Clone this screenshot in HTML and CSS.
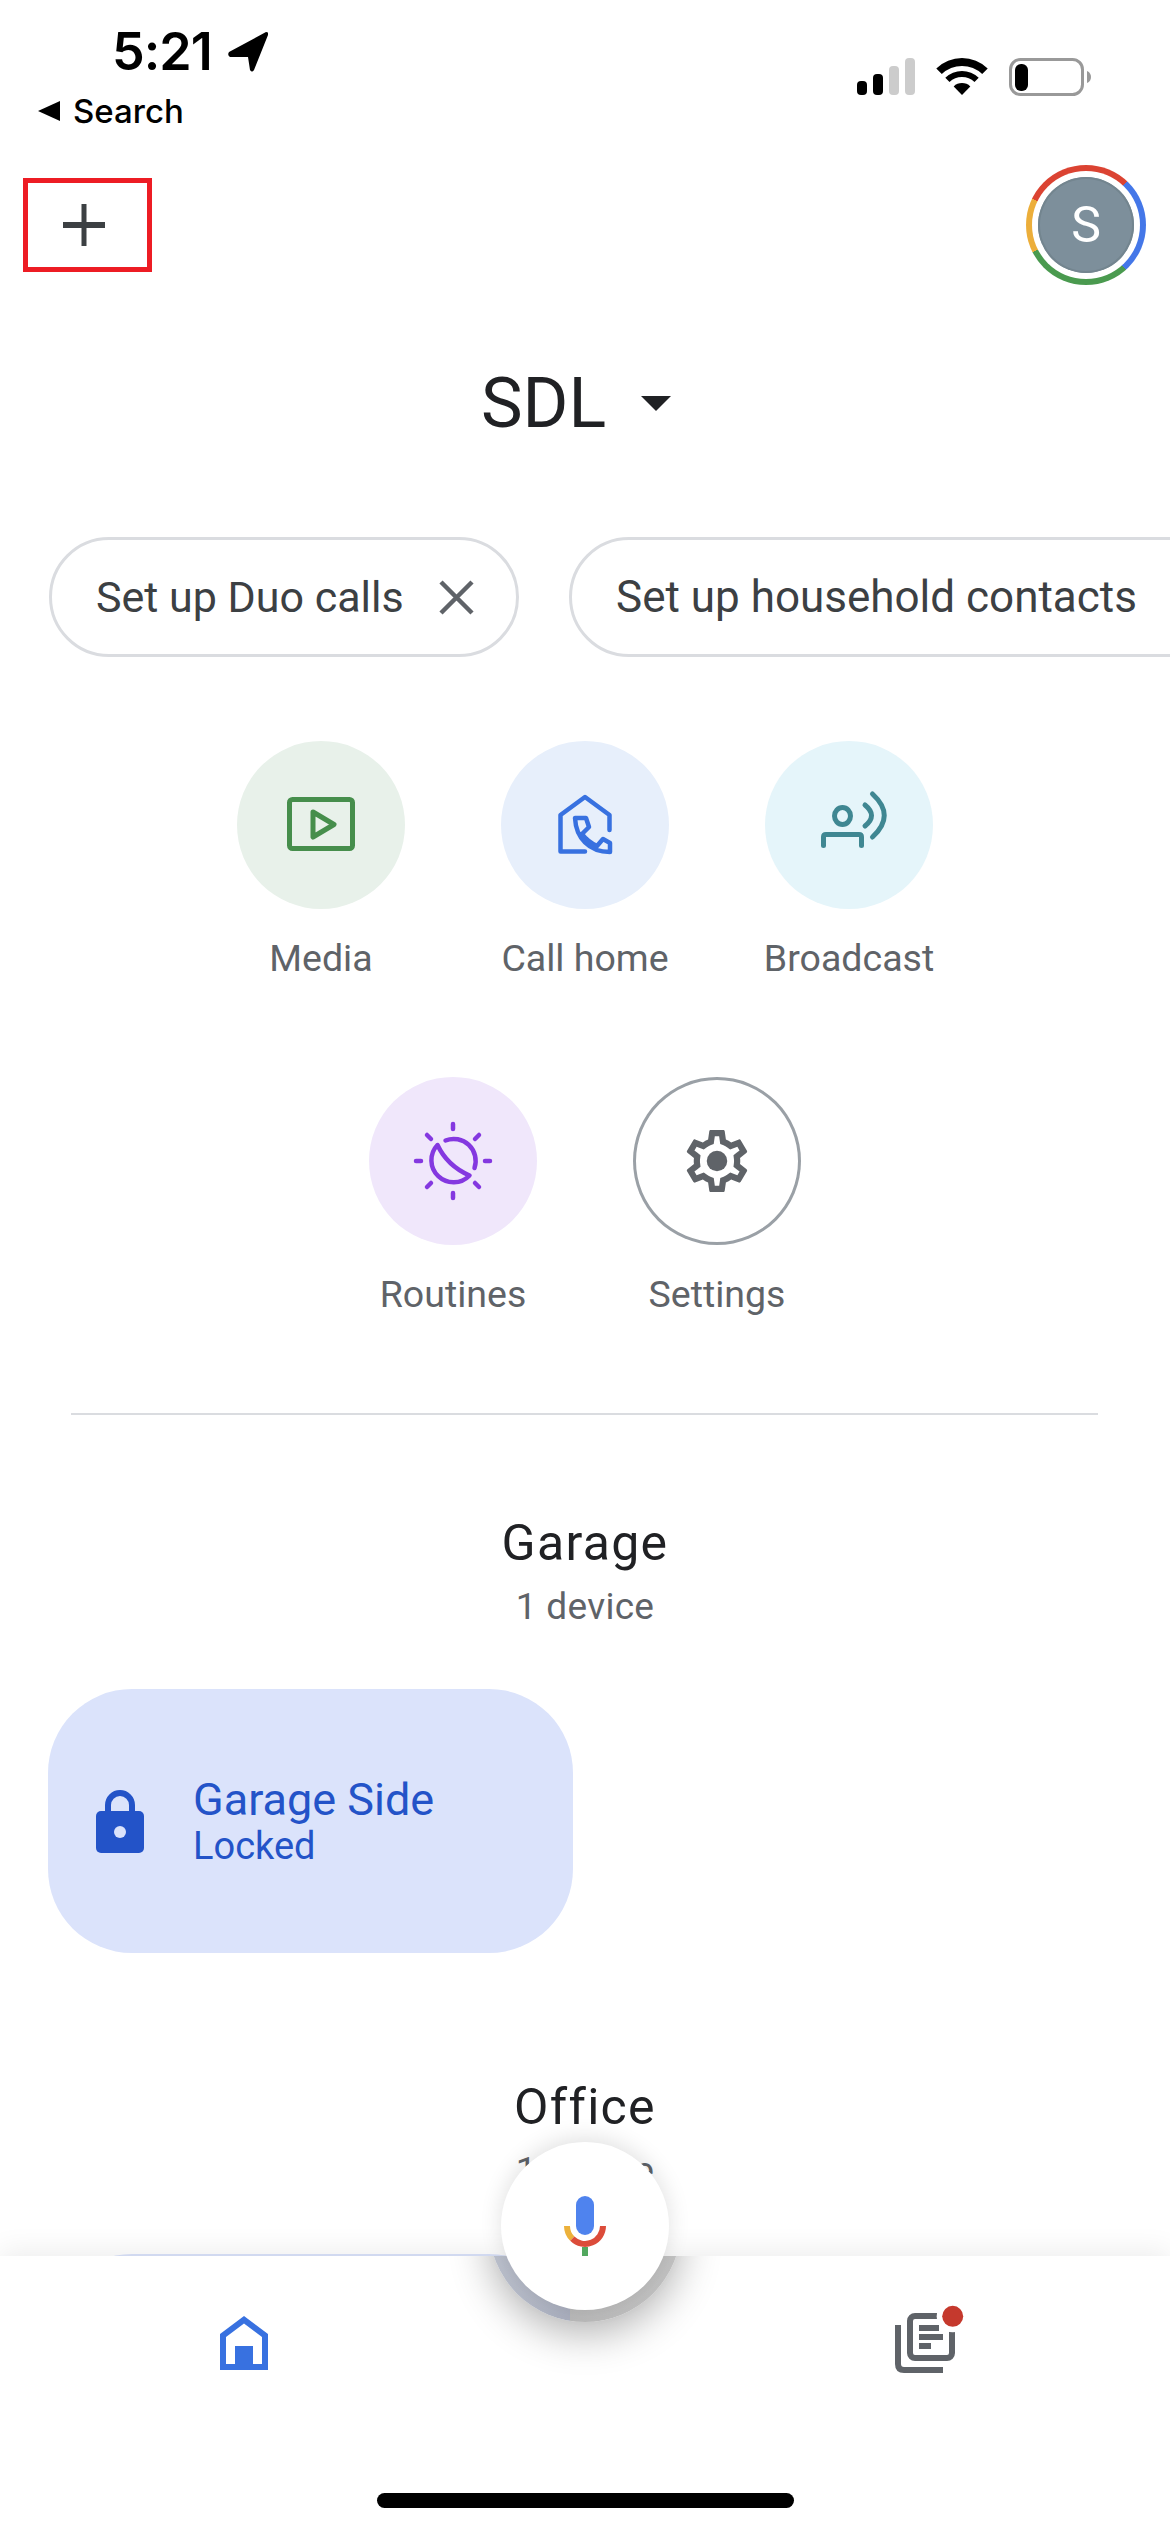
FILE: index.html
```html
<!DOCTYPE html>
<html lang="en">
<head>
<meta charset="utf-8">
<title>Google Home</title>
<link rel="stylesheet" href="styles.css">
</head>
<body>
<div class="page">
  <header class="status">
    <div class="status-left">
      <div class="time-row">
        <span class="time">5:21</span>
        <svg class="loc" width="40" height="40" viewBox="0 0 40 40"><path d="M38 0Q41 0 40 3L26 38Q24 41 22 38L20 25L2 25Q-1 23 1 20Z"/></svg>
      </div>
      <div class="back-row">
        <svg width="22" height="20" viewBox="0 0 22 20"><path d="M22 0V20L0 10Z"/></svg>
        <span class="back-text">Search</span>
      </div>
    </div>
    <div class="status-right">
      <svg width="58" height="37" viewBox="0 0 58 37"><rect y="23" width="10" height="14" rx="4"/><rect x="16" y="16" width="10" height="21" rx="4"/><rect class="dim" x="32" y="8" width="10" height="29" rx="4"/><rect class="dim" x="48" width="10" height="37" rx="4"/></svg>
      <svg width="52" height="38" viewBox="0 0 52 38"><path d="M0.3 10.4A37 37 0 0 1 51.7 10.4L46.2 16.1A29 29 0 0 0 5.8 16.1Z"/><path d="M9.3 19.7A24 24 0 0 1 42.7 19.7L38.5 24.1A18 18 0 0 0 13.5 24.1Z"/><path d="M17.7 28.4A12 12 0 0 1 34.3 28.4L26 37Z"/></svg>
      <svg width="82" height="38" viewBox="0 0 82 38"><rect class="batt" x="1.5" y="1.5" width="72" height="35" rx="10"/><rect x="6" y="6" width="13" height="27" rx="6"/><path class="nub" d="M78 13C81 14 82 17 82 19C82 21 81 24 78 25Z"/></svg>
    </div>
  </header>

  <div class="toolbar">
    <div class="add-box">
      <svg width="42" height="42" viewBox="0 0 42 42"><rect x="18.5" width="5" height="42"/><rect y="18" width="42" height="6"/></svg>
    </div>
    <div class="avatar"><div class="avatar-gap"><div class="avatar-face">S</div></div></div>
  </div>

  <div class="home-title">
    <span class="home-name">SDL</span>
    <svg width="30" height="15" viewBox="0 0 30 15"><path d="M0 0H30L15 15Z"/></svg>
  </div>

  <div class="chips">
    <div class="chip"><span>Set up Duo calls</span>
      <svg width="35" height="35" viewBox="0 0 35 35"><path d="M2 2L33 33M33 2L2 33"/></svg>
    </div>
    <div class="chip chip-long"><span>Set up household contacts</span>
      <svg width="35" height="35" viewBox="0 0 35 35"><path d="M2 2L33 33M33 2L2 33"/></svg>
    </div>
  </div>

  <div class="actions">
    <div class="action-row">
      <div class="action">
        <div class="disc disc-media">
          <svg class="ico ico-media" width="168" height="168" viewBox="0 0 168 168"><rect x="52.5" y="58.5" width="63" height="49" rx="3"/><path d="M76 71L97 83.5L76 96Z"/></svg>
        </div>
        <span class="action-label">Media</span>
      </div>
      <div class="action">
        <div class="disc disc-call">
          <svg class="ico ico-call" width="168" height="168" viewBox="0 0 168 168"><path d="M108.500 89V74L84 56L59.500 74V110.500H84"/><path d="M74 77H85L88 86L81 93C84 97 90 102 96 105L102 98L109 102V111C88 111 75 97 74 77Z"/></svg>
        </div>
        <span class="action-label">Call home</span>
      </div>
      <div class="action">
        <div class="disc disc-broadcast">
          <svg class="ico ico-broadcast" width="168" height="168" viewBox="0 0 168 168"><ellipse cx="77.500" cy="75" rx="8" ry="8.500"/><path d="M58.500 104.500V96Q58.500 93.500 61 93.500H94Q96.500 93.500 96.500 96V104.500"/><path d="M100 64Q113 74.500 100 85"/><path d="M107.500 53Q131 74.500 107.500 96"/></svg>
        </div>
        <span class="action-label">Broadcast</span>
      </div>
    </div>
    <div class="action-row">
      <div class="action">
        <div class="disc disc-routines">
          <svg class="ico ico-routines" width="168" height="168" viewBox="0 0 168 168"><path d="M84 47V52M84 116V121M47 84H52M116 84H121M58 58L62 62M110 58L106 62M58 110L62 106M110 110L106 106"/><path d="M76.500 63.500A22 22 0 0 1 105.500 91"/><path d="M68.500 68A22 22 0 0 0 100.500 98.500C88 93 76 84 68.500 68Z"/></svg>
        </div>
        <span class="action-label">Routines</span>
      </div>
      <div class="action">
        <div class="disc disc-settings">
          <svg class="ico-settings" width="168" height="168" viewBox="0 0 168 168"><g transform="translate(84 84) scale(3.1) translate(-12 -12)"><path d="M19.430 12.980c.04-.32.07-.64.07-.98 0-.34-.03-.66-.07-.98l2.110-1.650c.19-.15.24-.42.12-.64l-2-3.460c-.09-.16-.26-.25-.44-.25-.06 0-.12.01-.17.03l-2.490 1c-.52-.4-1.080-.73-1.690-.98l-.38-2.650C14.460 2.180 14.250 2 14 2h-4c-.25 0-.46.18-.49.42l-.38 2.650c-.61.25-1.170.59-1.690.98l-2.490-1c-.06-.02-.12-.03-.18-.03-.17 0-.34.09-.43.25l-2 3.460c-.13.22-.07.49.12.64l2.110 1.650c-.04.32-.07.65-.07.98 0 .33.03.66.07.98l-2.110 1.650c-.19.15-.24.42-.12.64l2 3.460c.09.16.26.25.44.25.06 0 .12-.01.17-.03l2.490-1c.52.4 1.080.73 1.690.98l.38 2.650c.03.24.24.42.49.42h4c.25 0 .46-.18.49-.42l.38-2.650c.61-.25 1.170-.59 1.690-.98l2.490 1c.06.02.12.03.18.03.17 0 .34-.09.43-.25l2-3.460c.12-.22.07-.49-.12-.64l-2.110-1.650zm-1.980-1.710c.04.31.05.52.05.73 0 .21-.02.43-.05.73l-.14 1.130.89.7 1.080.84-.7 1.210-1.270-.51-1.040-.42-.9.68c-.43.32-.84.56-1.250.73l-1.060.43-.16 1.130-.2 1.350h-1.400l-.19-1.350-.16-1.130-1.060-.43c-.43-.18-.83-.41-1.230-.71l-.91-.7-1.060.43-1.270.51-.7-1.210 1.080-.84.89-.7-.14-1.130c-.03-.31-.05-.54-.05-.74s.02-.43.05-.73l.14-1.130-.89-.7-1.080-.84.7-1.210 1.270.51 1.040.42.9-.68c.43-.32.84-.56 1.250-.73l1.060-.43.16-1.130.2-1.350h1.390l.19 1.350.16 1.130 1.060.43c.43.18.83.41 1.230.71l.91.7 1.060-.43 1.270-.51.7 1.210-1.070.85-.89.7.14 1.130z"/><circle cx="12" cy="12" r="3.300"/></g></svg>
        </div>
        <span class="action-label">Settings</span>
      </div>
    </div>
  </div>

  <div class="divider"></div>

  <section class="room">
    <h2 class="room-name">Garage</h2>
    <p class="room-count">1 device</p>
    <div class="device">
      <svg class="lock" width="48" height="63" viewBox="0 0 48 63"><path class="shackle" d="M12 24V15A12 12 0 0 1 36 15V24"/><rect y="21" width="48" height="42" rx="5"/><circle class="hole" cx="24" cy="42" r="6"/></svg>
      <div class="device-text">
        <span class="device-name">Garage Side</span>
        <span class="device-state">Locked</span>
      </div>
    </div>
  </section>

  <section class="room room-next">
    <h2 class="room-name">Office</h2>
    <p class="room-count">1 device</p>
    <div class="device"></div>
  </section>

  <nav class="nav">
    <div class="lift-clip"><div class="lift"></div></div>
    <div class="nav-row">
      <svg class="nav-home" width="48" height="54" viewBox="0 0 48 54"><path fill-rule="evenodd" d="M24 0L48 18V54H0V18ZM24 7.500L6 21V48H15V30H33V48H42V21Z"/></svg>
      <svg class="nav-news" width="80" height="80" viewBox="0 0 80 80"><path class="news-line" d="M8 25V64Q8 70 14 70H53"/><rect class="news-line" x="20" y="16" width="42" height="42" rx="5"/><rect class="news-fill" x="29" y="25" width="20" height="6"/><rect class="news-fill" x="29" y="34" width="24" height="6"/><rect class="news-fill" x="29" y="43" width="12" height="6"/><circle class="news-halo" cx="62.700" cy="16.300" r="16"/><circle class="news-dot" cx="62.700" cy="16.300" r="10.500"/></svg>
    </div>
    <div class="home-bar"></div>
    <div class="mic">
      <svg class="mic-ico" width="168" height="168" viewBox="0 0 168 168"><rect class="m-blue" x="75" y="54" width="18" height="39" rx="9"/><path class="m-yellow" d="M66 84A18 18 0 0 0 71.300 96.700"/><path class="m-red" d="M71.300 96.700A18 18 0 0 0 102 84"/><rect class="m-green" x="81" y="105" width="6" height="9"/></svg>
    </div>
  </nav>
</div>
</body>
</html>
```
FILE: styles.css
```css
* { box-sizing: border-box; }
html, body { margin: 0; padding: 0; background: #fff; }
body { font-family: Roboto, "Noto Sans", sans-serif; }
.page { position: relative; width: 1170px; height: 2532px; overflow: hidden; background: #fff; }

/* Status bar */
.status { display: flex; justify-content: space-between; height: 165px; font-family: Inter, "Liberation Sans", sans-serif; color: #000; }
.status-left { padding: 24px 0 0 38px; }
.time-row { display: flex; align-items: center; gap: 16px; height: 56px; padding-left: 74px; }
.time { font-size: 52px; font-weight: 600; letter-spacing: -1px; line-height: 56px; }
.back-row { display: flex; align-items: center; gap: 13px; height: 40px; margin-top: 11px; }
.back-text { font-size: 33px; font-weight: 500; line-height: 40px; }
.status-right { display: flex; align-items: flex-start; gap: 21px; padding: 58px 79px 0 0; }
.dim { fill: #cccccc; }
.batt { fill: none; stroke: #999; stroke-width: 3; }
.nub { fill: #999; }

/* Toolbar */
.toolbar { display: flex; justify-content: space-between; align-items: center; height: 120px; padding: 0 24px 0 23px; }
.add-box { display: flex; align-items: center; justify-content: center; width: 129px; height: 94px; padding-right: 7px; border: 5px solid #ed1c24; fill: #3c4043; }
.avatar { width: 120px; height: 120px; padding: 6px; border-radius: 50%; background: conic-gradient(#db4332 0 43deg, #4477e8 43deg 138deg, #4a9a4f 138deg 243deg, #ecae3a 243deg 296deg, #db4332 296deg 360deg); }
.avatar-gap { width: 100%; height: 100%; padding: 6px; border-radius: 50%; background: #fff; }
.avatar-face { display: flex; align-items: center; justify-content: center; width: 100%; height: 100%; border-radius: 50%; background: #7d8f9b; box-shadow: inset 0 0 0 2px #73858f; color: #fff; font-size: 50px; }

/* Home title */
.home-title { display: flex; align-items: center; justify-content: center; gap: 35px; height: 90px; margin-top: 73px; padding-right: 18px; color: #202124; fill: #202124; }
.home-name { font-size: 70px; line-height: 90px; }

/* Chips */
.chips { display: flex; gap: 50px; margin-top: 89px; padding-left: 49px; white-space: nowrap; }
.chip { display: flex; flex: none; align-items: center; gap: 35px; width: 470px; height: 120px; padding: 0 0 0 44px; border: 3px solid #dadce0; border-radius: 60px; color: #3c4043; font-size: 43px; }
.chip-long { width: auto; padding-right: 42px; font-size: 44px; }
.chip svg { flex: none; fill: none; stroke: #5f6368; stroke-width: 4.500; }

/* Action buttons */
.actions { display: flex; flex-direction: column; gap: 100px; margin-top: 84px; }
.action-row { display: flex; justify-content: center; gap: 96px; }
.action { display: flex; flex-direction: column; align-items: center; width: 168px; }
.disc { width: 168px; height: 168px; border-radius: 50%; }
.disc svg { display: block; }
.disc-media { background: #e8f1ea; }
.disc-call { background: #e7effb; }
.disc-broadcast { background: #e5f5fa; }
.disc-routines { background: #f0e7fb; }
.disc-settings { box-shadow: inset 0 0 0 3px #9aa0a6; }
.ico { fill: none; stroke-linecap: round; stroke-linejoin: round; stroke-width: 5; }
.ico-media { stroke: #468e4c; }
.ico-call { stroke: #3871e0; stroke-width: 4.500; }
.ico-broadcast { stroke: #3f8792; }
.ico-routines { stroke: #8438e0; stroke-width: 4.500; }
.ico-settings { fill: #5f6368; }
.action-label { margin-top: 29px; margin-bottom: -1px; color: #5f6368; font-size: 37.500px; line-height: 40px; white-space: nowrap; }

.divider { height: 2px; margin: 100px 72px 0 71px; background: #dadce0; }

/* Rooms */
.room { margin-top: 98px; }
.room-next { margin-top: 124px; }
.room-name { margin: 0; color: #202124; font-size: 50px; font-weight: 400; letter-spacing: 1.300px; line-height: 60px; text-align: center; }
.room-count { margin: 12px 0 0; color: #5f6368; font-size: 37px; letter-spacing: .3px; line-height: 44px; text-align: center; }
.device { display: flex; align-items: center; gap: 49px; width: 525px; height: 264px; margin: 60px 0 0 48px; padding-left: 48px; border-radius: 84px; background: #dbe3fb; color: #2353c8; fill: #2353c8; }
.room-next .device { margin-top: 61px; }
.shackle { fill: none; stroke: #2353c8; stroke-width: 6; }
.hole { fill: #dbe3fb; }
.device-text { display: flex; flex-direction: column; padding-top: 1px; }
.device-name { font-size: 45px; line-height: 48px; }
.device-state { font-size: 38px; line-height: 44px; }

/* Bottom navigation */
.nav { position: absolute; left: 0; right: 0; top: 2256px; bottom: 0; display: flex; flex-direction: column; background: #fff; box-shadow: 0 -6px 26px rgba(0,0,0,.07); }
.lift-clip { position: absolute; inset: 0; overflow: hidden; }
.lift { position: absolute; left: 489px; top: -126px; width: 192px; height: 192px; border-radius: 50%; background: linear-gradient(to right, #bcc1cd 0, #a8adbc 42%, #b7b7b7 42%, #c2c2c2 100%); box-shadow: 0 12px 40px rgba(0,0,0,.3); }
.nav-row { position: relative; display: flex; justify-content: space-between; align-items: flex-start; padding: 44px 200px 0 220px; }
.nav-home { margin-top: 16px; fill: #3871e0; }
.news-line { fill: none; stroke: #5f6368; stroke-width: 6; }
.news-fill { fill: #5f6368; }
.news-halo { fill: #fff; }
.news-dot { fill: #c5392d; }
.home-bar { position: relative; align-self: center; width: 417px; height: 15px; margin-top: auto; margin-bottom: 24px; border-radius: 8px; background: #000; }
.mic { position: absolute; left: 501px; top: -114px; width: 168px; height: 168px; border-radius: 50%; background: #fff; box-shadow: 0 -4px 22px rgba(0,0,0,.12); }
.mic-ico { display: block; }
.m-blue { fill: #4f83ee; }
.m-yellow { fill: none; stroke: #ecb13b; stroke-width: 6; }
.m-red { fill: none; stroke: #dc4c3a; stroke-width: 6; }
.m-green { fill: #52a85f; }
```
